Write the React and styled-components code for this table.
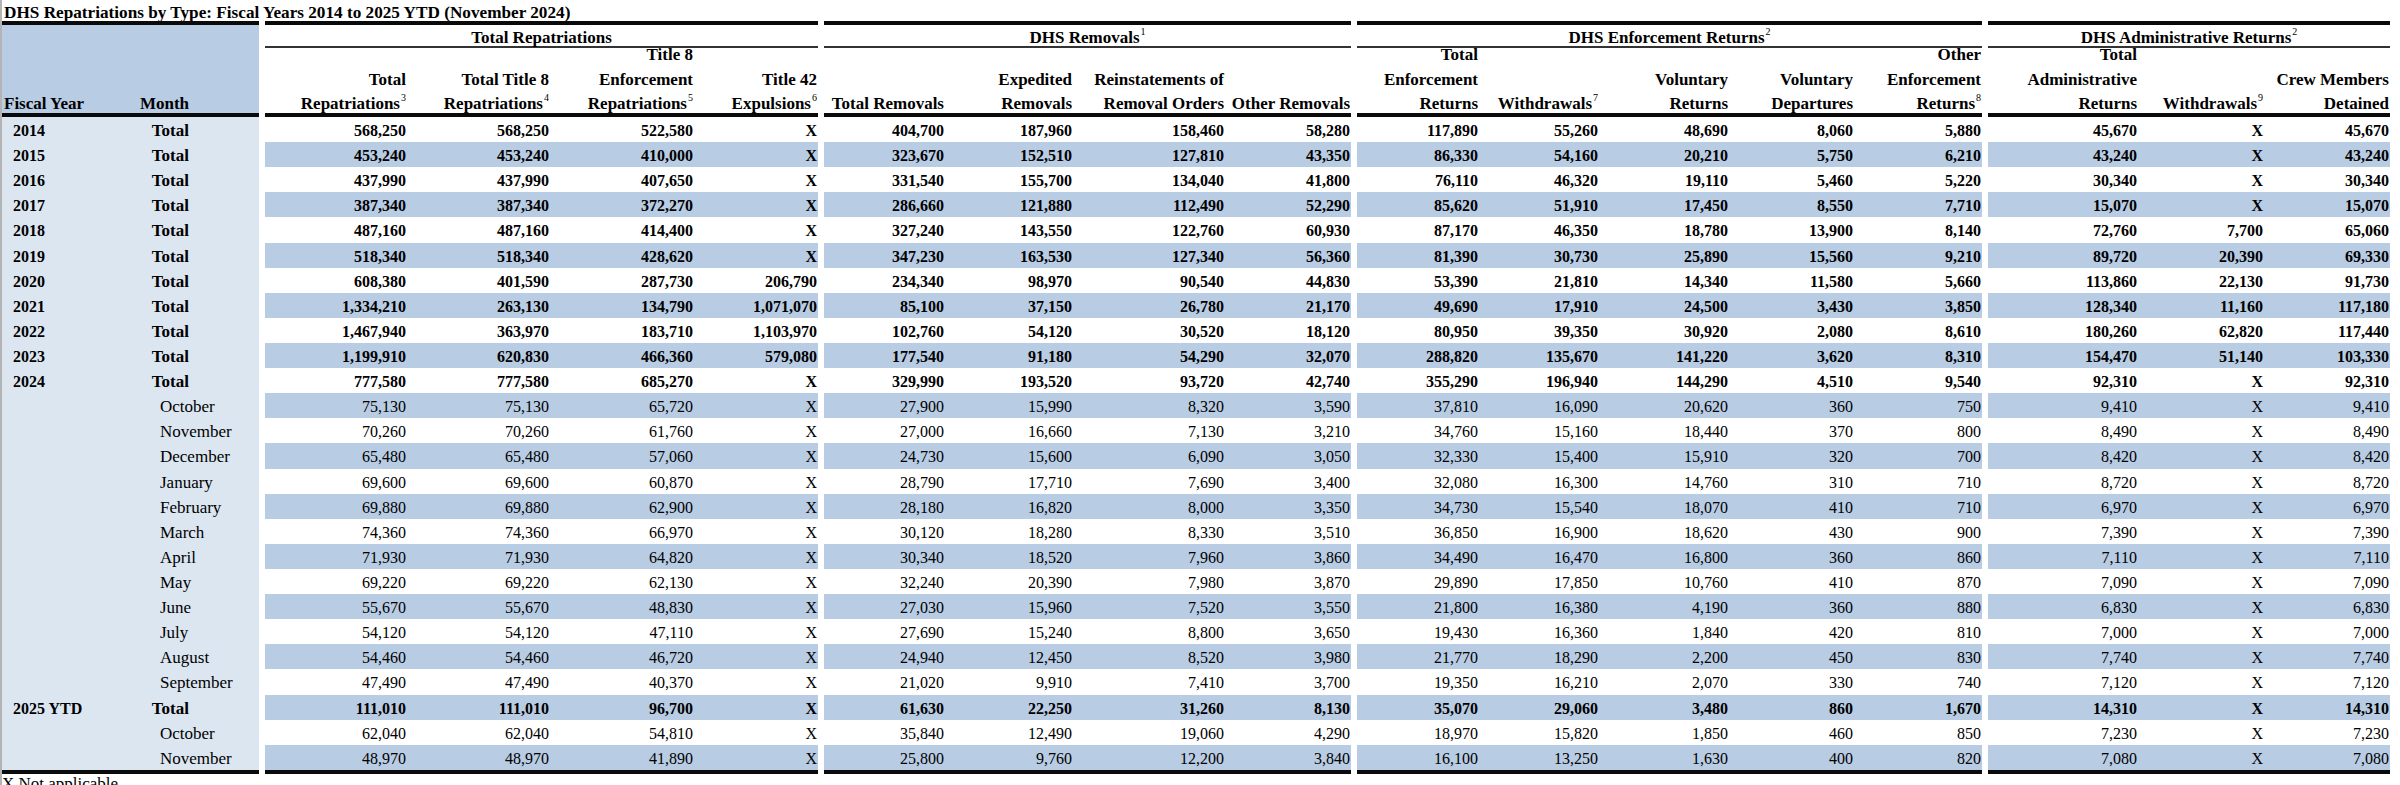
import React from 'react';
import styled, { createGlobalStyle } from 'styled-components';

const ROW_H = 25.12;
const BAND = '#b8cce4';
const PALE = '#dce6f1';
const RULE = '#0a0a0a';

const GlobalStyle = createGlobalStyle`
  html, body { margin: 0; padding: 0; background: #fff; }
  body {
    width: 2400px;
    height: 785px;
    overflow: hidden;
    font-family: "Liberation Serif", "Times New Roman", serif;
    color: #000;
  }
`;

const Page = styled.div`
  display: flex;
  height: 785px;
  overflow: hidden;
`;

const EdgeStrip = styled.div`
  width: 2px;
  flex: none;
  background: #b4b4b4;
`;

const Content = styled.div`
  display: flex;
  flex-direction: column;
  & > * { flex: none; }
`;

const Title = styled.div`
  height: 21px;
  display: flex;
  align-items: flex-end;
  padding-left: 2px;
  font-size: 17.2px;
  line-height: 16px;
  font-weight: 700;
  white-space: nowrap;
`;

const Sheet = styled.div`
  display: flex;
  gap: 6px;
  align-items: flex-start;
`;

const Block = styled.section`
  width: ${p => p.$w}px;
  flex: none;
  border-top: 4px solid ${RULE};
  border-bottom: 4px solid ${RULE};
  background: ${p => p.$bg || '#fff'};
`;

const LeftHead = styled.div`
  height: 88px;
  background: ${BAND};
  border-bottom: 4px solid ${RULE};
  display: flex;
  align-items: flex-end;
  font-size: 17px;
  font-weight: 700;
  line-height: 24.5px;
`;

const LeftHeadCell = styled.div`
  width: ${p => p.$w}px;
  flex: none;
  box-sizing: border-box;
  margin-bottom: -3.5px;
  white-space: nowrap;
  text-align: ${p => (p.$right ? 'right' : 'left')};
  padding-left: ${p => (p.$right ? 0 : 2)}px;
  padding-right: ${p => (p.$right ? 70 : 0)}px;
`;

const LeftRow = styled.div`
  display: grid;
  grid-template-columns: 128px 1fr;
  height: ${ROW_H}px;
  font-size: 17px;
  line-height: 22px;
  padding-top: 3px;
  box-sizing: border-box;
  font-weight: ${p => (p.$bold ? 700 : 400)};
`;

const YearCell = styled.div`
  padding-left: 11px;
  font-size: 16px;
  white-space: nowrap;
`;

const MonthCell = styled.div`
  white-space: nowrap;
  text-align: ${p => (p.$total ? 'right' : 'left')};
  padding-right: ${p => (p.$total ? 70 : 0)}px;
  padding-left: ${p => (p.$total ? 0 : 30)}px;
`;

const GroupTitle = styled.div`
  height: 21px;
  border-bottom: 2px solid #333;
  display: flex;
  align-items: flex-end;
  justify-content: center;
  font-size: 17px;
  line-height: 16px;
  font-weight: 700;
  white-space: nowrap;
`;

const ColHeads = styled.div`
  height: 65px;
  display: flex;
  align-items: flex-end;
  border-bottom: 4px solid ${RULE};
`;

const ColHead = styled.div`
  width: ${p => p.$w}px;
  flex: none;
  box-sizing: border-box;
  margin-bottom: -3.5px;
  padding-right: 1px;
  text-align: right;
  font-size: 17px;
  line-height: 24.5px;
  font-weight: 700;
  white-space: nowrap;
`;

const Row = styled.div`
  display: grid;
  grid-template-columns: ${p => p.$cols};
  height: ${ROW_H}px;
  box-sizing: border-box;
  padding-top: 3px;
  background: ${p => (p.$shade ? BAND : '#fff')};
  font-size: 16px;
  line-height: 22px;
  font-weight: ${p => (p.$bold ? 700 : 400)};
`;

const Cell = styled.div`
  text-align: right;
  padding-right: 1px;
  white-space: nowrap;
`;

const Sup = styled.sup`
  font-size: 10px;
  font-weight: 400;
  line-height: 0;
  vertical-align: 8px;
  margin-left: 1px;
`;

const Footnote = styled.div`
  font-size: 17px;
  line-height: 20px;
  white-space: nowrap;
`;

const groups = [
  {
    title: 'Total Repatriations',
    widths: [142, 143, 144, 124],
    heads: [
      [['Total'], ['Repatriations', '3']],
      [['Total Title 8'], ['Repatriations', '4']],
      [['Title 8'], ['Enforcement'], ['Repatriations', '5']],
      [['Title 42'], ['Expulsions', '6']],
    ],
  },
  {
    title: 'DHS Removals',
    sup: '1',
    widths: [121, 128, 152, 126],
    heads: [
      [['Total Removals']],
      [['Expedited'], ['Removals']],
      [['Reinstatements of'], ['Removal Orders']],
      [['Other Removals']],
    ],
  },
  {
    title: 'DHS Enforcement Returns',
    sup: '2',
    widths: [122, 120, 130, 125, 128],
    heads: [
      [['Total'], ['Enforcement'], ['Returns']],
      [['Withdrawals', '7']],
      [['Voluntary'], ['Returns']],
      [['Voluntary'], ['Departures']],
      [['Other'], ['Enforcement'], ['Returns', '8']],
    ],
  },
  {
    title: 'DHS Administrative Returns',
    sup: '2',
    widths: [150, 126, 126],
    heads: [
      [['Total'], ['Administrative'], ['Returns']],
      [['Withdrawals', '9']],
      [['Crew Members'], ['Detained']],
    ],
  },
];

// fiscal year, month, then the 16 figures in column order
const rows = [
  ['2014', 'Total', '568,250 568,250 522,580 X 404,700 187,960 158,460 58,280 117,890 55,260 48,690 8,060 5,880 45,670 X 45,670'],
  ['2015', 'Total', '453,240 453,240 410,000 X 323,670 152,510 127,810 43,350 86,330 54,160 20,210 5,750 6,210 43,240 X 43,240'],
  ['2016', 'Total', '437,990 437,990 407,650 X 331,540 155,700 134,040 41,800 76,110 46,320 19,110 5,460 5,220 30,340 X 30,340'],
  ['2017', 'Total', '387,340 387,340 372,270 X 286,660 121,880 112,490 52,290 85,620 51,910 17,450 8,550 7,710 15,070 X 15,070'],
  ['2018', 'Total', '487,160 487,160 414,400 X 327,240 143,550 122,760 60,930 87,170 46,350 18,780 13,900 8,140 72,760 7,700 65,060'],
  ['2019', 'Total', '518,340 518,340 428,620 X 347,230 163,530 127,340 56,360 81,390 30,730 25,890 15,560 9,210 89,720 20,390 69,330'],
  ['2020', 'Total', '608,380 401,590 287,730 206,790 234,340 98,970 90,540 44,830 53,390 21,810 14,340 11,580 5,660 113,860 22,130 91,730'],
  ['2021', 'Total', '1,334,210 263,130 134,790 1,071,070 85,100 37,150 26,780 21,170 49,690 17,910 24,500 3,430 3,850 128,340 11,160 117,180'],
  ['2022', 'Total', '1,467,940 363,970 183,710 1,103,970 102,760 54,120 30,520 18,120 80,950 39,350 30,920 2,080 8,610 180,260 62,820 117,440'],
  ['2023', 'Total', '1,199,910 620,830 466,360 579,080 177,540 91,180 54,290 32,070 288,820 135,670 141,220 3,620 8,310 154,470 51,140 103,330'],
  ['2024', 'Total', '777,580 777,580 685,270 X 329,990 193,520 93,720 42,740 355,290 196,940 144,290 4,510 9,540 92,310 X 92,310'],
  ['', 'October', '75,130 75,130 65,720 X 27,900 15,990 8,320 3,590 37,810 16,090 20,620 360 750 9,410 X 9,410'],
  ['', 'November', '70,260 70,260 61,760 X 27,000 16,660 7,130 3,210 34,760 15,160 18,440 370 800 8,490 X 8,490'],
  ['', 'December', '65,480 65,480 57,060 X 24,730 15,600 6,090 3,050 32,330 15,400 15,910 320 700 8,420 X 8,420'],
  ['', 'January', '69,600 69,600 60,870 X 28,790 17,710 7,690 3,400 32,080 16,300 14,760 310 710 8,720 X 8,720'],
  ['', 'February', '69,880 69,880 62,900 X 28,180 16,820 8,000 3,350 34,730 15,540 18,070 410 710 6,970 X 6,970'],
  ['', 'March', '74,360 74,360 66,970 X 30,120 18,280 8,330 3,510 36,850 16,900 18,620 430 900 7,390 X 7,390'],
  ['', 'April', '71,930 71,930 64,820 X 30,340 18,520 7,960 3,860 34,490 16,470 16,800 360 860 7,110 X 7,110'],
  ['', 'May', '69,220 69,220 62,130 X 32,240 20,390 7,980 3,870 29,890 17,850 10,760 410 870 7,090 X 7,090'],
  ['', 'June', '55,670 55,670 48,830 X 27,030 15,960 7,520 3,550 21,800 16,380 4,190 360 880 6,830 X 6,830'],
  ['', 'July', '54,120 54,120 47,110 X 27,690 15,240 8,800 3,650 19,430 16,360 1,840 420 810 7,000 X 7,000'],
  ['', 'August', '54,460 54,460 46,720 X 24,940 12,450 8,520 3,980 21,770 18,290 2,200 450 830 7,740 X 7,740'],
  ['', 'September', '47,490 47,490 40,370 X 21,020 9,910 7,410 3,700 19,350 16,210 2,070 330 740 7,120 X 7,120'],
  ['2025 YTD', 'Total', '111,010 111,010 96,700 X 61,630 22,250 31,260 8,130 35,070 29,060 3,480 860 1,670 14,310 X 14,310'],
  ['', 'October', '62,040 62,040 54,810 X 35,840 12,490 19,060 4,290 18,970 15,820 1,850 460 850 7,230 X 7,230'],
  ['', 'November', '48,970 48,970 41,890 X 25,800 9,760 12,200 3,840 16,100 13,250 1,630 400 820 7,080 X 7,080'],
].map(([year, month, figs]) => ({ year, month, total: month === 'Total', figs: figs.split(' ') }));

const HeadText = ({ lines, w }) => (
  <ColHead $w={w}>
    {lines.map(([text, sup], i) => (
      <div key={i}>
        {text}
        {sup && <Sup>{sup}</Sup>}
      </div>
    ))}
  </ColHead>
);

const DataGroup = ({ group, offset }) => {
  const n = group.heads.length;
  const total = group.widths.reduce((a, b) => a + b, 0);
  const cols = group.widths.map(w => `${w}px`).join(' ');
  return (
    <Block $w={total}>
      <GroupTitle>
        <span>
          {group.title}
          {group.sup && <Sup>{group.sup}</Sup>}
        </span>
      </GroupTitle>
      <ColHeads>
        {group.heads.map((lines, i) => <HeadText key={i} lines={lines} w={group.widths[i]} />)}
      </ColHeads>
      {rows.map((r, ri) => (
        <Row key={ri} $cols={cols} $shade={ri % 2 === 1} $bold={r.total}>
          {r.figs.slice(offset, offset + n).map((v, ci) => <Cell key={ci}>{v}</Cell>)}
        </Row>
      ))}
    </Block>
  );
};

export default function App() {
  let offset = 0;
  const groupEls = groups.map((g, i) => {
    const el = <DataGroup key={i} group={g} offset={offset} />;
    offset += g.heads.length;
    return el;
  });

  return (
    <>
      <GlobalStyle />
      <Page>
        <EdgeStrip />
        <Content>
          <Title>DHS Repatriations by Type: Fiscal Years 2014 to 2025 YTD (November 2024)</Title>
          <Sheet>
            <Block $w={257} $bg={PALE}>
              <LeftHead>
                <LeftHeadCell $w={128}>Fiscal Year</LeftHeadCell>
                <LeftHeadCell $w={129} $right>Month</LeftHeadCell>
              </LeftHead>
              {rows.map((r, i) => (
                <LeftRow key={i} $bold={r.total}>
                  <YearCell>{r.year}</YearCell>
                  <MonthCell $total={r.total}>{r.month}</MonthCell>
                </LeftRow>
              ))}
            </Block>
            {groupEls}
          </Sheet>
          <Footnote>X Not applicable</Footnote>
        </Content>
      </Page>
    </>
  );
}
